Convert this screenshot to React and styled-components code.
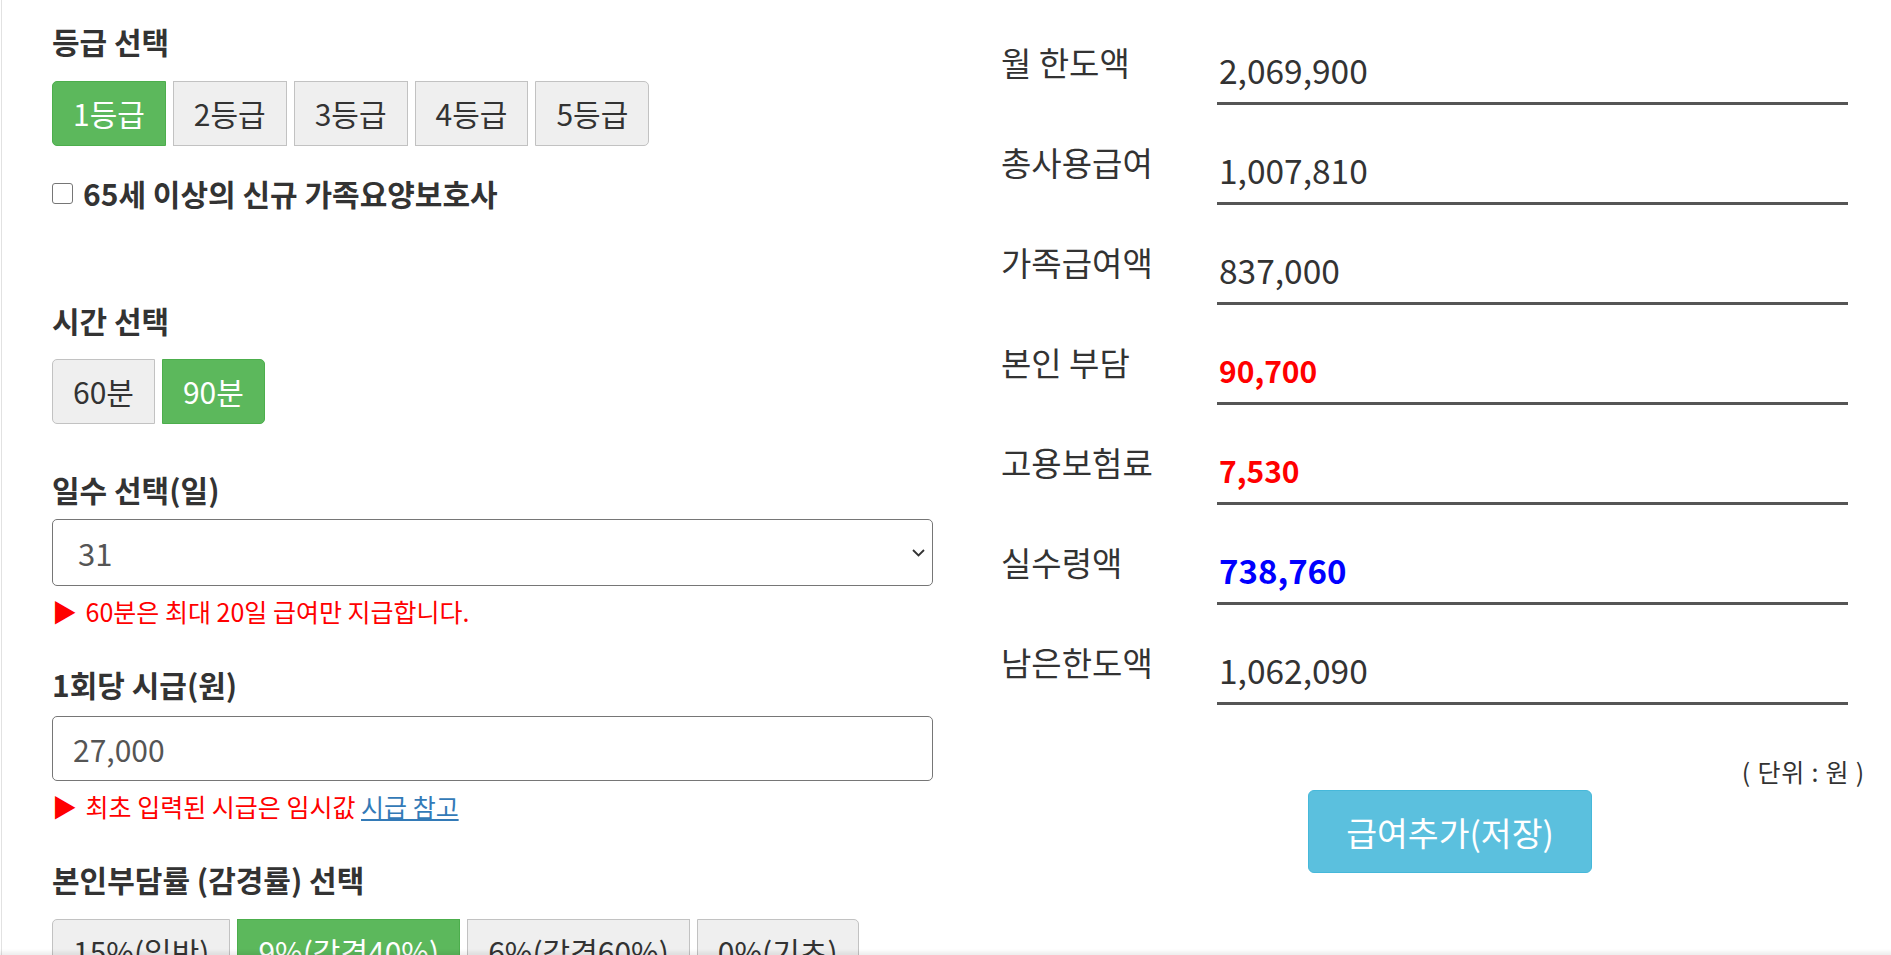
import React from "react";
import styled, { createGlobalStyle } from "styled-components";

const GlobalStyle = createGlobalStyle`
  html, body { margin: 0; padding: 0; background: #fff; overflow: hidden; }
  body { font-family: "Noto Sans CJK KR", "Noto Sans", sans-serif; color: #333; }
  *, *::before, *::after { box-sizing: border-box; }
`;

const Page = styled.div`
  display: flex;
  min-height: 955px;
  margin-left: 1px;
  border-left: 1px solid #e2e2e2;
`;

const LeftCol = styled.div`
  width: 931px;
  flex: none;
  padding: 21px 0 0 50px;
`;

const RightCol = styled.div`
  flex: 1;
  margin-left: 68px;
  padding: 5px 26px 0 0;
`;

const Heading = styled.h4`
  margin: ${(p) => p.$mt || 0}px 0 0;
  font-size: 30px;
  font-weight: 700;
  line-height: 40px;
  color: #333;
`;

const ButtonGroup = styled.div`
  display: flex;
  gap: 7px;
  margin-top: ${(p) => p.$mt || 0}px;
`;

const SegButton = styled.button`
  font-family: inherit;
  font-size: 30px;
  line-height: 39px;
  padding: 12px 20px;
  border: 1px solid ${(p) => (p.$active ? "#4cae4c" : "#c2c2c2")};
  background: ${(p) => (p.$active ? "#5cb85c" : "#efefef")};
  color: ${(p) => (p.$active ? "#fff" : "#333")};
  border-radius: 0;
  cursor: pointer;
  white-space: nowrap;
  &:first-child { border-radius: 5px 0 0 5px; }
  &:last-child { border-radius: 0 5px 5px 0; }
`;

const CheckRow = styled.label`
  display: flex;
  align-items: center;
  gap: 10px;
  margin-top: 28px;
  font-size: 30px;
  font-weight: 700;
  line-height: 38px;
`;

const Checkbox = styled.input`
  appearance: none;
  width: 21px;
  height: 21px;
  margin: 0;
  border: 1.5px solid #767676;
  border-radius: 3px;
  background: #fff;
`;

const SelectWrap = styled.div`
  position: relative;
  margin-top: 10px;
`;

const Select = styled.select`
  appearance: none;
  width: 100%;
  height: 67px;
  padding: 0 25px;
  font-family: inherit;
  font-size: 31px;
  color: #555;
  background: #fff;
  border: 1px solid #767676;
  border-radius: 5px;
  outline: none;
`;

const Chevron = styled.svg`
  position: absolute;
  right: 8px;
  top: 50%;
  transform: translateY(-50%);
  pointer-events: none;
`;

const TextInput = styled.input`
  display: block;
  width: 100%;
  height: 65px;
  margin-top: 12px;
  padding: 0 20px;
  font-family: inherit;
  font-size: 30px;
  color: #555;
  background: #fff;
  border: 1px solid #767676;
  border-radius: 5px;
  outline: none;
`;

const Note = styled.p`
  margin: 8px 0 0;
  font-size: 25px;
  line-height: 34px;
  color: #f00;
`;

const Arrow = styled.span`
  margin-right: 3px;
`;

const Link = styled.a`
  color: #337ab7;
  text-decoration: underline;
`;

const Rows = styled.div`
  width: 847px;
`;

const Row = styled.div`
  display: flex;
  height: 100px;
`;

const Label = styled.div`
  width: 216px;
  flex: none;
  padding-top: 37px;
  font-size: 33px;
  line-height: 40px;
  color: #333;
`;

const Value = styled.div`
  flex: 1;
  display: flex;
  align-items: flex-end;
  padding: 0 0 10px 2px;
  border-bottom: 3px solid #555;
  font-size: ${(p) => p.$size}px;
  font-weight: ${(p) => (p.$bold ? 700 : 400)};
  color: ${(p) => p.$color || "#333"};
  line-height: 44px;
`;

const Unit = styled.div`
  margin-top: 50px;
  text-align: right;
  font-size: 25px;
  letter-spacing: 0.8px;
  line-height: 32px;
  color: #333;
`;

const ButtonRow = styled.div`
  display: flex;
  justify-content: center;
  padding-left: 34px;
  margin-top: 3px;
`;

const SaveButton = styled.button`
  font-family: inherit;
  font-size: 33.5px;
  line-height: 43px;
  padding: 19px 37px;
  color: #fff;
  background: #5bc0de;
  border: 1px solid #46b8da;
  border-radius: 6px;
  cursor: pointer;
`;

const BottomShade = styled.div`
  position: fixed;
  left: 0;
  right: 0;
  bottom: 0;
  height: 6px;
  background: linear-gradient(rgba(0, 0, 0, 0), rgba(0, 0, 0, 0.07));
  pointer-events: none;
`;

const grades = ["1등급", "2등급", "3등급", "4등급", "5등급"];
const times = ["60분", "90분"];
const rates = ["15%(일반)", "9%(감경40%)", "6%(감경60%)", "0%(기초)"];
const results = [
  { label: "월 한도액", value: "2,069,900", size: 33.5 },
  { label: "총사용급여", value: "1,007,810", size: 33.5 },
  { label: "가족급여액", value: "837,000", size: 33.5 },
  { label: "본인 부담", value: "90,700", size: 30, bold: true, color: "#f00" },
  { label: "고용보험료", value: "7,530", size: 30, bold: true, color: "#f00" },
  { label: "실수령액", value: "738,760", size: 33, bold: true, color: "#00f" },
  { label: "남은한도액", value: "1,062,090", size: 33.5 },
];

export default function App() {
  return (
    <>
      <GlobalStyle />
      <Page>
        <LeftCol>
          <Heading>등급 선택</Heading>
          <ButtonGroup $mt={20}>
            {grades.map((g, i) => (
              <SegButton key={g} $active={i === 0}>{g}</SegButton>
            ))}
          </ButtonGroup>
          <CheckRow>
            <Checkbox type="checkbox" />
            65세 이상의 신규 가족요양보호사
          </CheckRow>

          <Heading $mt={88}>시간 선택</Heading>
          <ButtonGroup $mt={19}>
            {times.map((t, i) => (
              <SegButton key={t} $active={i === 1}>{t}</SegButton>
            ))}
          </ButtonGroup>

          <Heading $mt={45}>일수 선택(일)</Heading>
          <SelectWrap>
            <Select defaultValue="31">
              <option value="31">31</option>
            </Select>
            <Chevron width="13" height="9" viewBox="0 0 13 9">
              <polyline points="1,1.5 6.5,7 12,1.5" fill="none" stroke="#333" strokeWidth="1.8" />
            </Chevron>
          </SelectWrap>
          <Note><Arrow>▶</Arrow> 60분은 최대 20일 급여만 지급합니다.</Note>

          <Heading $mt={36}>1회당 시급(원)</Heading>
          <TextInput defaultValue="27,000" />
          <Note>
            <Arrow>▶</Arrow> 최초 입력된 시급은 임시값 <Link href="#">시급 참고</Link>
          </Note>

          <Heading $mt={36}>본인부담률 (감경률) 선택</Heading>
          <ButtonGroup $mt={20}>
            {rates.map((r, i) => (
              <SegButton key={r} $active={i === 1}>{r}</SegButton>
            ))}
          </ButtonGroup>
        </LeftCol>

        <RightCol>
          <Rows>
            {results.map((r) => (
              <Row key={r.label}>
                <Label>{r.label}</Label>
                <Value $size={r.size} $bold={r.bold} $color={r.color}>{r.value}</Value>
              </Row>
            ))}
          </Rows>
          <Unit>( 단위 : 원 )</Unit>
          <ButtonRow>
            <SaveButton>급여추가(저장)</SaveButton>
          </ButtonRow>
        </RightCol>
      </Page>
      <BottomShade />
    </>
  );
}
